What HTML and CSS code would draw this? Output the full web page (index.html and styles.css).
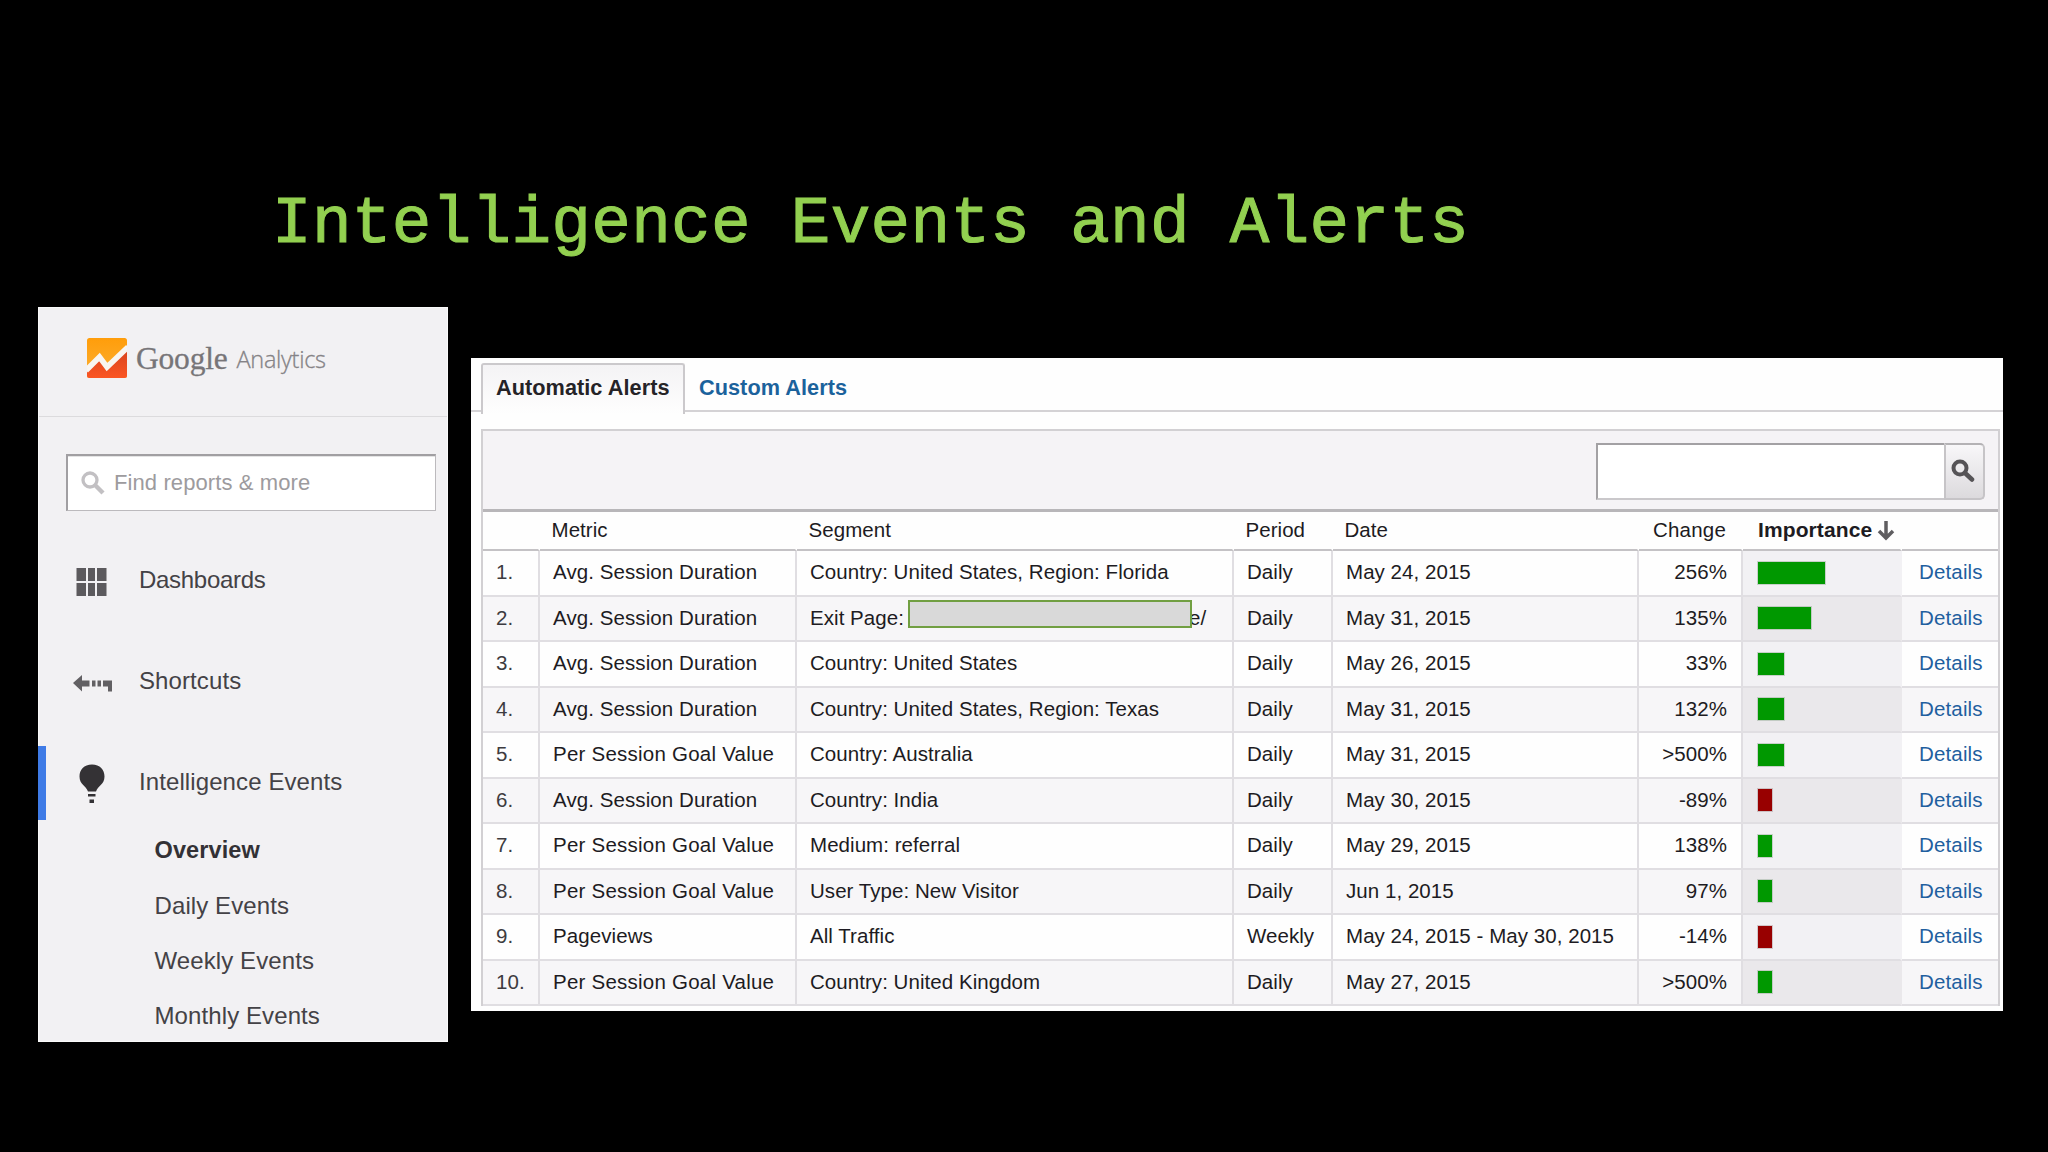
FILE: index.html
```html
<!DOCTYPE html>
<html lang="en">
<head>
<meta charset="utf-8">
<title>Intelligence Events and Alerts</title>
<link rel="stylesheet" href="styles.css">
</head>
<body>
<main class="slide">
  <h1 class="title">Intelligence Events and Alerts</h1>
  <div class="panels">
    <aside class="sidebar">
      <header class="brand">
        <svg class="brand-icon" viewBox="0 0 40 40">
          <defs>
            <linearGradient id="amber" x1="0" y1="0" x2="0" y2="1"><stop offset="0" stop-color="#ff9d0a"/><stop offset="1" stop-color="#fbb034"/></linearGradient>
            <linearGradient id="red" x1="0" y1="0" x2="0" y2="1"><stop offset="0" stop-color="#d8451f"/><stop offset="1" stop-color="#fb5523"/></linearGradient>
          </defs>
          <rect width="40" height="40" rx="2.5" fill="url(#amber)"/>
          <path d="M0 34 13 20 20 31 40 12V37.500a2.500 2.500 0 0 1-2.500 2.500h-35A2.500 2.500 0 0 1 0 37.500Z" fill="url(#red)"/>
          <path d="M-1 32.500 12.500 19 20 29 41 9" fill="none" stroke="#f8f5f1" stroke-width="5.500"/>
        </svg>
        <span class="google">Google</span><span class="analytics">Analytics</span>
      </header>
      <div class="find">
        <svg class="find-icon" viewBox="0 0 24 24" fill="none" stroke="#c2c0c3"><circle cx="9" cy="9" r="7" stroke-width="3.300"/><path d="m14 14 8 8" stroke-width="4.500"/></svg>
        <span class="find-text">Find reports &amp; more</span>
      </div>
      <nav class="nav">
        <a class="nav-item">
          <svg class="nav-icon" viewBox="0 0 40 40" fill="#5c5a5d"><path d="M4.500 7h9.500v13H4.500zM16 7h7v13h-7zM25 7h9.500v13H25zM4.500 22h9.500v13H4.500zM16 22h7v13h-7zM25 22h9.500v13H25z"/></svg>
          <span class="nav-dash">Dashboards</span>
        </a>
        <a class="nav-item">
          <svg class="nav-icon" viewBox="0 0 40 40" fill="#626063"><path d="M1 21 10 13V18.500h7.500v6H10v5ZM20 18.500h3.500v6H20zM25.500 18.500h3.500v6h-3.500zM31 18.500h9v11h-4v-5h-5z"/></svg>
          <span class="nav-short">Shortcuts</span>
        </a>
        <a class="nav-item active">
          <svg class="nav-icon" viewBox="0 0 40 40" fill="#343235"><path d="M20 1.500C12 1.500 7.500 6.500 7.500 13.500c0 8 6.500 9 8.500 15h8c2-6 8.500-7 8.500-15C32.500 6.500 28 1.500 20 1.500ZM16 31h7.500v2.500H16zM17.500 36.500H22V40h-4.500z"/></svg>
          <span>Intelligence Events</span>
        </a>
      </nav>
      <nav class="subnav">
        <a class="current">Overview</a>
        <a>Daily Events</a>
        <a>Weekly Events</a>
        <a>Monthly Events</a>
      </nav>
    </aside>
    <section class="report">
      <div class="tabs">
        <a class="tab selected">Automatic Alerts</a>
        <a class="tab">Custom Alerts</a>
      </div>
      <div class="box">
        <div class="toolbar">
          <div class="search-field"></div>
          <div class="search-button">
            <svg class="search-icon" viewBox="0 0 24 24" fill="none" stroke="#555356"><circle cx="9" cy="9" r="6.500" stroke-width="4"/><path d="m14 14 7 6.500" stroke-width="4.500" stroke-linecap="round"/></svg>
          </div>
        </div>
        <div class="row head">
          <div></div><div>Metric</div><div>Segment</div><div>Period</div><div>Date</div><div class="change">Change</div>
          <div class="importance">Importance<svg class="sort" viewBox="0 0 18 20" fill="none" stroke="#5f5d60" stroke-width="3.500"><path d="M9 0v17M2 10l7 7 7-7"/></svg></div><div></div>
        </div>
        <div class="row"><div>1.</div><div class="metric">Avg. Session Duration</div><div>Country: United States, Region: Florida</div><div>Daily</div><div>May 24, 2015</div><div class="change">256%</div><div class="meter"><i class="bar up" style="width:67px"></i></div><div class="link">Details</div></div>
        <div class="row"><div>2.</div><div class="metric">Avg. Session Duration</div><div>Exit Page:<span class="redacted"></span><span class="tail">e/</span></div><div>Daily</div><div>May 31, 2015</div><div class="change">135%</div><div class="meter"><i class="bar up" style="width:53px"></i></div><div class="link">Details</div></div>
        <div class="row"><div>3.</div><div class="metric">Avg. Session Duration</div><div>Country: United States</div><div>Daily</div><div>May 26, 2015</div><div class="change">33%</div><div class="meter"><i class="bar up" style="width:26px"></i></div><div class="link">Details</div></div>
        <div class="row"><div>4.</div><div class="metric">Avg. Session Duration</div><div>Country: United States, Region: Texas</div><div>Daily</div><div>May 31, 2015</div><div class="change">132%</div><div class="meter"><i class="bar up" style="width:26px"></i></div><div class="link">Details</div></div>
        <div class="row"><div>5.</div><div class="metric goal">Per Session Goal Value</div><div>Country: Australia</div><div>Daily</div><div>May 31, 2015</div><div class="change">&gt;500%</div><div class="meter"><i class="bar up" style="width:26px"></i></div><div class="link">Details</div></div>
        <div class="row"><div>6.</div><div class="metric">Avg. Session Duration</div><div>Country: India</div><div>Daily</div><div>May 30, 2015</div><div class="change">-89%</div><div class="meter"><i class="bar down" style="width:14px"></i></div><div class="link">Details</div></div>
        <div class="row"><div>7.</div><div class="metric goal">Per Session Goal Value</div><div>Medium: referral</div><div>Daily</div><div>May 29, 2015</div><div class="change">138%</div><div class="meter"><i class="bar up" style="width:14px"></i></div><div class="link">Details</div></div>
        <div class="row"><div>8.</div><div class="metric goal">Per Session Goal Value</div><div>User Type: New Visitor</div><div>Daily</div><div>Jun 1, 2015</div><div class="change">97%</div><div class="meter"><i class="bar up" style="width:14px"></i></div><div class="link">Details</div></div>
        <div class="row"><div>9.</div><div class="metric">Pageviews</div><div>All Traffic</div><div>Weekly</div><div>May 24, 2015 - May 30, 2015</div><div class="change">-14%</div><div class="meter"><i class="bar down" style="width:14px"></i></div><div class="link">Details</div></div>
        <div class="row"><div>10.</div><div class="metric goal">Per Session Goal Value</div><div>Country: United Kingdom</div><div>Daily</div><div>May 27, 2015</div><div class="change">&gt;500%</div><div class="meter"><i class="bar up" style="width:14px"></i></div><div class="link">Details</div></div>
      </div>
    </section>
  </div>
</main>
</body>
</html>
```
FILE: styles.css
```css
* { box-sizing: border-box; }

body {
  margin: 0;
  background: #000;
  font-family: "Liberation Sans", Arial, sans-serif;
}

.slide {
  width: 2048px;
  height: 1152px;
  overflow: hidden;
  padding-top: 185px;
}

.title {
  margin: 0;
  height: 122px;
  padding-left: 272px;
  font: 400 66px/80px "Liberation Mono", "Courier New", monospace;
  letter-spacing: 0.3px;
  color: #92d050;
  -webkit-text-stroke: 1px #92d050;
  white-space: nowrap;
}

.panels {
  display: flex;
  align-items: flex-start;
  gap: 23px;
  padding-left: 38px;
}

/* Sidebar */
.sidebar {
  width: 410px;
  height: 735px;
  background: #f2f1f3;
  border: 1px solid #fafafa;
  color: #444246;
  font-size: 24px;
}

.brand {
  height: 109px;
  display: flex;
  align-items: center;
  padding: 0 0 8px 48px;
  border-bottom: 1px solid #dcdbdd;
}

.brand-icon { width: 40px; height: 40px; }

.google {
  margin: 2px 0 0 9px;
  font: 31.500px/40px "Liberation Serif", "Times New Roman", serif;
  letter-spacing: -0.2px;
  color: #777578;
  -webkit-text-stroke: 0.3px #777578;
}

.analytics {
  margin: 2px 0 0 9px;
  font: 300 23.500px/40px "Open Sans", sans-serif;
  letter-spacing: -0.3px;
  color: #858386;
  -webkit-text-stroke: 0.3px #858386;
}

.find {
  display: flex;
  align-items: center;
  width: 370px;
  height: 57px;
  margin: 37px 0 0 27px;
  padding-left: 13px;
  background: #fff;
  border: 1px solid #bcbabd;
  border-top: 2px solid #a19fa2;
  border-left: 2px solid #a19fa2;
  box-shadow: inset 0 1px 0 #e4e4e4;
}

.find-icon { width: 24px; height: 24px; }
.find-text { margin-left: 9px; font-size: 22px; letter-spacing: 0.1px; color: #9d9b9e; }

.nav {
  display: flex;
  flex-direction: column;
  gap: 27px;
  margin: 33px 0 0 -1px;
}

.nav-item {
  display: flex;
  align-items: center;
  height: 74px;
  padding-left: 26px;
  border-left: 8px solid transparent;
}

.nav-item.active { border-left-color: #3f7be6; }
.nav-icon { width: 40px; height: 40px; }
.nav-item span { margin: -2px 0 0 27px; letter-spacing: 0.1px; }
.nav-item .nav-dash { letter-spacing: -0.3px; }

.subnav {
  display: flex;
  flex-direction: column;
  margin: 2.500px 0 0 115.500px;
  letter-spacing: 0.1px;
}

.subnav a { height: 55px; line-height: 55px; }
.subnav .current { font-weight: 700; font-size: 23.500px; color: #333135; }

/* Report */
.report {
  width: 1532px;
  height: 653px;
  margin-top: 51px;
  background: #fefefe;
  font-size: 20.500px;
  letter-spacing: 0.05px;
  color: #1d1b22;
}

.tabs {
  display: flex;
  height: 54px;
  padding: 5px 0 0 10px;
  border-bottom: 2px solid #d4d2d5;
}

.tab {
  height: 49px;
  padding: 0 14px;
  font-size: 21.700px;
  font-weight: 700;
  line-height: 50px;
  color: #1b629c;
}

.tab.selected {
  width: 204px;
  padding: 0 0 0 13px;
  line-height: 46px;
  background: linear-gradient(#f4f3f5, #fefefe);
  border: 2px solid #cbc9cc;
  border-bottom: 0;
  border-radius: 3px 3px 0 0;
  color: #252327;
}

/* The selected tab opens onto the page below it */
.tab.selected { height: 51px; }

.box {
  width: 1519px;
  margin: 17px 0 0 10px;
  border: 2px solid #d2d0d3;
  border-bottom: 0;
}

.toolbar {
  display: flex;
  justify-content: flex-end;
  height: 81px;
  padding: 12px 13px 0 0;
  background: #f5f3f6;
  border-bottom: 3px solid #b8b6b9;
}

.search-field {
  width: 348px;
  height: 57px;
  background: #fff;
  border: 2px solid #cac8cb;
  border-top-color: #a3a1a4;
  border-left-color: #a3a1a4;
  border-right: 0;
}

.search-button {
  display: flex;
  align-items: center;
  justify-content: center;
  width: 41px;
  height: 57px;
  padding: 0 3px 1px 0;
  background: linear-gradient(#f8f7f9, #dcdadd);
  border: 2px solid #c6c4c7;
  border-top-color: #b4b2b5;
  border-radius: 0 5px 5px 0;
}

.search-icon { width: 24px; height: 24px; flex: none; }

.row {
  display: grid;
  grid-template-columns: 57px 257px 437px 99px 306px 104px 159px 96px;
  height: 45.500px;
  white-space: nowrap;
}

.row > div {
  display: flex;
  align-items: center;
  padding: 0 0 1px 13px;
  border-right: 2px solid #e0dee2;
  border-bottom: 2px solid #e0dee2;
}

.row > div:first-child { color: #3d3b40; }
.row > div:last-child { border-right: 0; }
.row:nth-child(odd) > div { background: #fefefe; }
.row:nth-child(even) > div { background: #f7f6f8; }
.row > .metric { letter-spacing: 0.08px; }
.row > .goal { letter-spacing: 0.23px; }
.row > .change { justify-content: flex-end; padding: 0 14px 1px 0; }
.row > .link { padding-left: 17px; letter-spacing: 0.15px; color: #1f5f9f; }
.row > .meter { padding: 0 0 0 15px; border-right-color: transparent; }

.row.head { height: 39px; }
.row.head > div {
  padding: 0 0 2px 11.500px;
  background: #fefefe;
  border-right-color: transparent;
  border-bottom-color: #c4c2c5;
}
.row.head > .change { padding: 0 15px 2px 0; letter-spacing: 0.2px; }
.row.head > .importance { padding-left: 15px; font-size: 21px; font-weight: 700; letter-spacing: 0.1px; }

.sort { width: 18px; height: 20px; margin: 3px 0 0 5px; flex: none; }

/* Importance column keeps a darker stripe pair than the rest of the table */
.row:nth-child(odd) > .meter { background: #f2f1f4; }
.row:nth-child(even) > .meter { background: #eae8eb; }

.bar {
  height: 22px;
  box-shadow: 0 0 0 1px rgba(120, 150, 120, 0.35);
}
.bar.up { background: #009800; }
.bar.down { background: #980000; box-shadow: 0 0 0 1px rgba(150, 120, 120, 0.35); }

.redacted {
  position: relative;
  top: -4px;
  width: 284px;
  height: 28px;
  margin-left: 4px;
  background: #d9d9d9;
  border: 2px solid #719f42;
}
.tail { margin-left: -3px; }
```
